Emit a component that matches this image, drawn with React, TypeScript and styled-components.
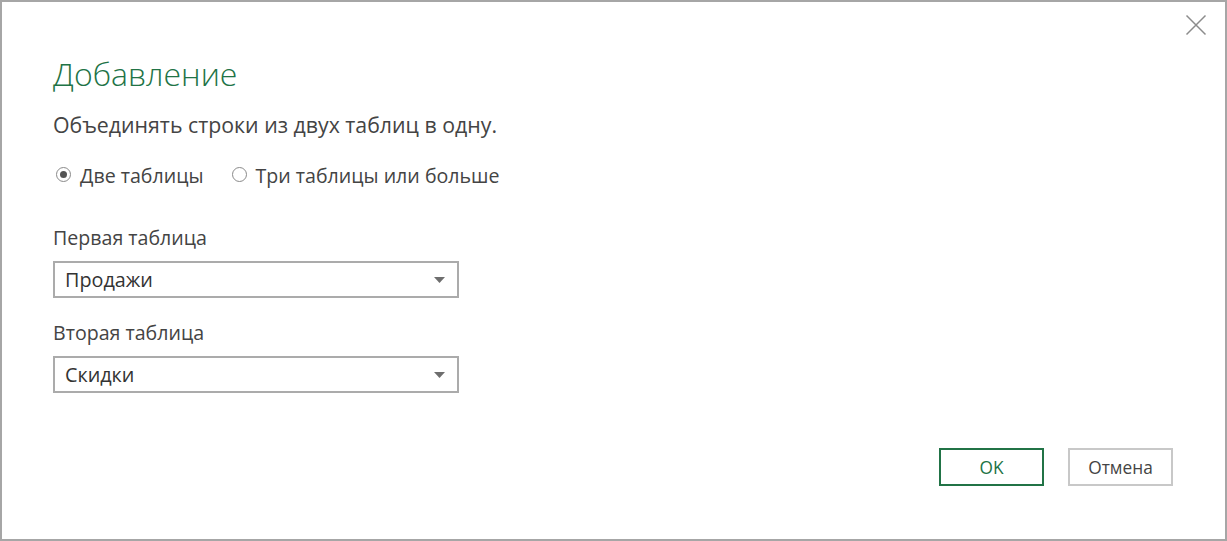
import React from "react";
import styled, { createGlobalStyle } from "styled-components";

const Global = createGlobalStyle`
  html, body { margin: 0; padding: 0; background: #ffffff; }
  body { font-family: "Open Sans", "Noto Sans", sans-serif; }
  * { box-sizing: border-box; }
`;

const Dialog = styled.div`
  position: relative;
  width: 1227px;
  height: 541px;
  border: 2px solid #a6a6a6;
  background: #ffffff;
  padding: 0 51px;
  display: flex;
  flex-direction: column;
  color: #444444;
`;

const CloseButton = styled.button`
  position: absolute;
  top: 11px;
  right: 17px;
  width: 24px;
  height: 24px;
  padding: 0;
  border: none;
  background: transparent;
  display: flex;
  align-items: center;
  justify-content: center;
`;

const Title = styled.h1`
  margin: 48px 0 0 0;
  font-family: "Open Sans", "Noto Sans", sans-serif;
  font-weight: 300;
  font-size: 32px;
  line-height: 48px;
  color: #217346;
`;

const Description = styled.p`
  margin: 12px 0 0 0;
  font-size: 21.3px;
  line-height: 30px;
  color: #444444;
`;

const RadioRow = styled.div`
  display: flex;
  align-items: center;
  gap: 28px;
  margin-top: 22px;
  padding-left: 3px;
`;

const RadioLabel = styled.label`
  display: flex;
  align-items: center;
  gap: 9px;
  font-size: 19.6px;
  line-height: 28px;
  color: #444444;
`;

const RadioCircle = styled.span<{ $checked?: boolean }>`
  width: 15px;
  height: 15px;
  border-radius: 50%;
  border: 1px solid #8a8a8a;
  background: #ffffff;
  display: flex;
  align-items: center;
  justify-content: center;
  flex: none;
  margin-top: -4px;
  &::after {
    content: "";
    width: 7px;
    height: 7px;
    border-radius: 50%;
    background: ${(p) => (p.$checked ? "#555555" : "transparent")};
  }
`;

const Field = styled.div<{ $first?: boolean }>`
  display: flex;
  flex-direction: column;
  margin-top: ${(p) => (p.$first ? "34px" : "21px")};
`;

const FieldLabel = styled.div`
  font-size: 19.6px;
  line-height: 28px;
  color: #444444;
  margin-bottom: 9px;
`;

const Select = styled.div`
  width: 406px;
  height: 37px;
  border: 2px solid #ababab;
  display: flex;
  align-items: center;
  justify-content: space-between;
  padding: 0 12px 0 10px;
  font-size: 19.8px;
  color: #333333;
`;

const Footer = styled.div`
  margin-top: auto;
  margin-bottom: 53px;
  margin-right: 1px;
  display: flex;
  justify-content: flex-end;
  gap: 24px;
`;

const Button = styled.button<{ $primary?: boolean }>`
  width: 105px;
  height: 38px;
  background: #ffffff;
  border: 2px solid ${(p) => (p.$primary ? "#217346" : "#c8c8c8")};
  font-family: "Open Sans", "Noto Sans", sans-serif;
  font-size: 17.3px;
  color: ${(p) => (p.$primary ? "#217346" : "#444444")};
  padding: 0;
`;

const Arrow = () => (
  <svg width="11" height="6" viewBox="0 0 11 6">
    <path d="M0 0 H11 L5.5 6 Z" fill="#6e6e6e" />
  </svg>
);

export default function App() {
  return (
    <>
      <Global />
      <Dialog>
        <CloseButton aria-label="Закрыть">
          <svg width="22" height="22" viewBox="0 0 22 22">
            <path d="M1.5 1.5 L20.5 20.5 M20.5 1.5 L1.5 20.5" stroke="#8c8c8c" strokeWidth="1.5" fill="none" />
          </svg>
        </CloseButton>
        <Title>Добавление</Title>
        <Description>Объединять строки из двух таблиц в одну.</Description>
        <RadioRow>
          <RadioLabel>
            <RadioCircle $checked />
            Две таблицы
          </RadioLabel>
          <RadioLabel>
            <RadioCircle />
            Три таблицы или больше
          </RadioLabel>
        </RadioRow>
        <Field $first>
          <FieldLabel>Первая таблица</FieldLabel>
          <Select>
            <span>Продажи</span>
            <Arrow />
          </Select>
        </Field>
        <Field>
          <FieldLabel>Вторая таблица</FieldLabel>
          <Select>
            <span>Скидки</span>
            <Arrow />
          </Select>
        </Field>
        <Footer>
          <Button $primary>OK</Button>
          <Button>Отмена</Button>
        </Footer>
      </Dialog>
    </>
  );
}
